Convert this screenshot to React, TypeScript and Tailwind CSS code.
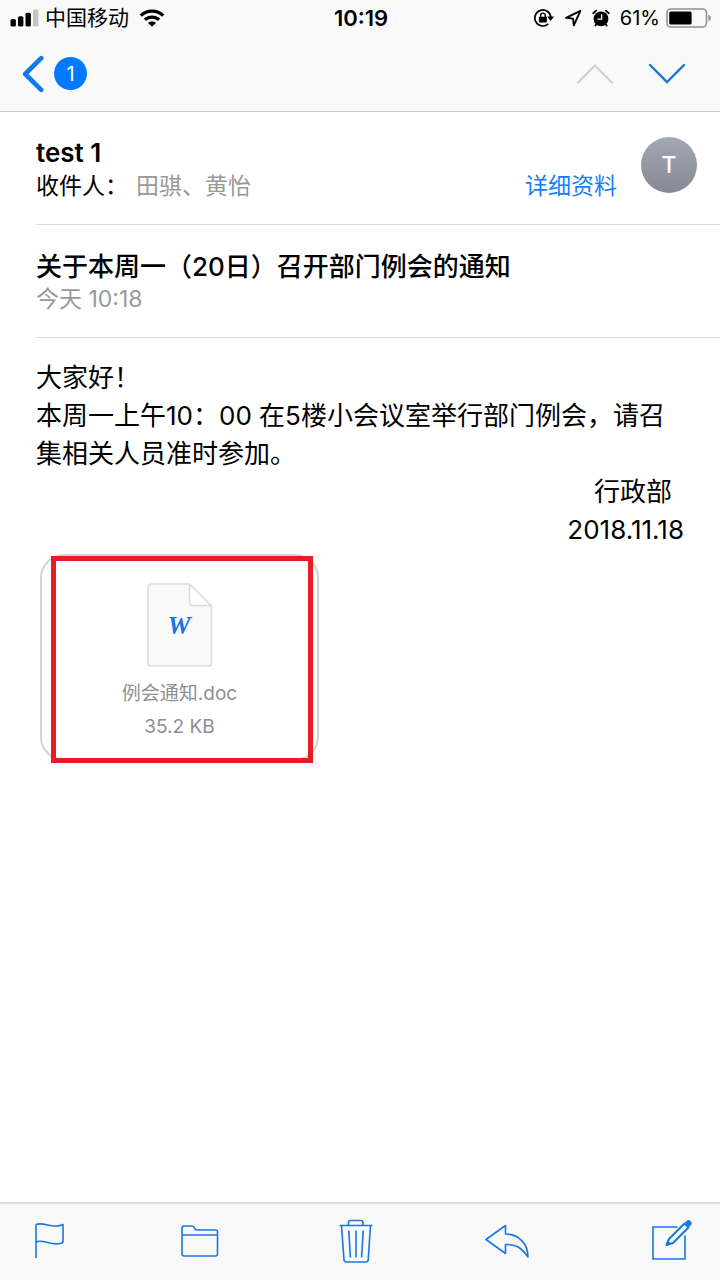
import type { ReactNode } from "react";

function SignalIcon() {
  return (
    <svg width="29" height="18" viewBox="0 0 29 18" aria-hidden="true">
      <rect x="0.5" y="10" width="5.4" height="7.5" rx="1.6" fill="#000" />
      <rect x="8" y="7.2" width="5.4" height="10.3" rx="1.6" fill="#000" />
      <rect x="15.500" y="3.700" width="5.400" height="13.800" rx="1.6" fill="#000" />
      <rect x="23" y="0.5" width="5.4" height="17" rx="1.6" fill="#c4c4c4" />
    </svg>
  );
}

function WifiIcon() {
  return (
    <svg width="26" height="18" viewBox="0 0 26 18" aria-hidden="true" fill="none" stroke="#000" strokeWidth="3.2">
      <path d="M1.8 6.6C8 .6 18 .6 24.2 6.6" />
      <path d="M6 10.9C10 7.1 16 7.1 20 10.9" />
      <path d="M13 17.6L9 13.9C11.2 12 14.8 12 17 13.9Z" fill="#000" stroke="none" />
    </svg>
  );
}

function RotationLockIcon() {
  return (
    <svg width="20" height="18" viewBox="0 0 20 18" aria-hidden="true" fill="none" stroke="#000" strokeWidth="1.7">
      <path d="M14.2 14.9A8 8 0 1 1 16.8 8.2" />
      <path d="M13.2 7.6H20L16.6 12Z" fill="#000" stroke="none" />
      <rect x="4.9" y="7.8" width="8" height="5.6" rx="0.8" fill="#000" stroke="none" />
      <path d="M6.6 8V6.4A2.3 2.3 0 0 1 11.2 6.4V8" strokeWidth="1.4" />
    </svg>
  );
}

function LocationIcon() {
  return (
    <svg width="18" height="18" viewBox="0 0 18 18" aria-hidden="true" fill="none" stroke="#000" strokeWidth="1.9" strokeLinejoin="round">
      <path d="M16.400 1.800L2 8.800L9 9.600L9.800 16.400Z" />
    </svg>
  );
}

function AlarmIcon() {
  return (
    <svg width="18" height="18" viewBox="0 0 18 18" aria-hidden="true">
      <circle cx="9" cy="9.800" r="7.400" fill="#000" />
      <path d="M1.200 4.200L4.200 1.600M16.800 4.200L13.800 1.600M4.400 15L3.400 16.600M13.600 15L14.600 16.600" stroke="#000" strokeWidth="1.8" strokeLinecap="round" />
      <path d="M9.600 5.2V10.2H5.6" fill="none" stroke="#f9f9f9" strokeWidth="1.3" />
    </svg>
  );
}

function BatteryIcon() {
  return (
    <svg width="46" height="20" viewBox="0 0 46 20" aria-hidden="true">
      <rect x="1" y="1" width="39.5" height="18" rx="4" fill="none" stroke="#909090" strokeWidth="1.6" />
      <rect x="3.2" y="3.4" width="22.4" height="13.2" rx="1.6" fill="#000" />
      <path d="M42.4 6.4Q45 7.6 45 10T42.4 13.6Z" fill="#909090" />
    </svg>
  );
}

function DocumentIcon() {
  return (
    <svg width="66" height="84" viewBox="0 0 66 84" role="img" aria-label="Word">
      <path
        d="M4 1H42L64.500 23V80Q64.500 83 61.500 83H4Q1 83 1 80V4Q1 1 4 1Z"
        fill="#f9f9f9"
        stroke="#dcdcdc"
        strokeWidth="1.6"
        strokeLinejoin="round"
      />
      <path d="M42.500 1V19Q42.500 22.500 46 22.500H64Z" fill="#fff" stroke="#dcdcdc" strokeWidth="1.6" strokeLinejoin="round" />
      <text x="32" y="51" textAnchor="middle" fill="#1376e4" fontFamily="Liberation Serif, serif" fontSize="26" fontStyle="italic" fontWeight="700">
        W
      </text>
    </svg>
  );
}

function ToolButton({ label, viewBox = "0 0 44 48", children }: { label: string; viewBox?: string; children: ReactNode }) {
  return (
    <button type="button" aria-label={label} className="flex h-12 items-center justify-center">
      <svg width="44" height="48" viewBox={viewBox} fill="none" stroke="#1877e2" strokeWidth="1.6" strokeLinejoin="round">
        {children}
      </svg>
    </button>
  );
}

export default function App() {
  return (
    <div className="flex min-h-screen flex-col bg-white font-[Inter,'Noto_Sans_CJK_SC',sans-serif] text-black" lang="zh-CN">
      <header className="border-b border-[#c8c8c8] bg-[#f9f9f9]">
        <div className="grid h-9 grid-cols-[1fr_auto_1fr] items-center pr-2 pl-2.5">
          <div className="flex items-center gap-1.5">
            <SignalIcon />
            <span className="text-[21px] leading-9">中国移动</span>
            <span className="pl-1">
              <WifiIcon />
            </span>
          </div>
          <time className="text-[22px] leading-9 font-semibold">10:19</time>
          <div className="flex items-center justify-end">
            <span className="flex items-center gap-2.5 pr-2.5">
              <RotationLockIcon />
              <LocationIcon />
              <AlarmIcon />
            </span>
            <span className="pr-1.5 text-[20px] leading-9">61%</span>
            <BatteryIcon />
          </div>
        </div>
        <nav className="flex h-[75px] items-center justify-between pr-[34px] pl-[22px]">
          <button type="button" aria-label="返回收件箱" className="flex items-center gap-2.5">
            <svg width="22" height="38" viewBox="0 0 22 38" fill="none" stroke="#1079ee" strokeWidth="4.6" strokeLinecap="round" strokeLinejoin="round">
              <path d="M19.200 3.200L3.200 19L19.200 34.800" />
            </svg>
            <span className="flex size-[33px] items-center justify-center rounded-full bg-[#007aff] text-[20px] text-white">1</span>
          </button>
          <div className="flex items-center gap-[34px]">
            <button type="button" aria-label="上一封" disabled>
              <svg width="38" height="22" viewBox="0 0 38 22" fill="none" stroke="#cfcfcf" strokeWidth="2.2" strokeLinecap="round">
                <path d="M2 19.500L19 2.500L36 19.500" />
              </svg>
            </button>
            <button type="button" aria-label="下一封">
              <svg width="38" height="22" viewBox="0 0 38 22" fill="none" stroke="#1a74dc" strokeWidth="2.4" strokeLinecap="round">
                <path d="M2 2L19 19L36 2" />
              </svg>
            </button>
          </div>
        </nav>
      </header>

      <main className="flex-1 pl-9">
        <section className="flex h-[113px] items-start justify-between border-b border-[#dcdcdc] pt-[25px] pr-[23px]">
          <div className="flex flex-1 flex-col">
            <h2 className="text-[26px] leading-8 font-semibold">test 1</h2>
            <div className="flex items-center justify-between pr-6 text-[23px] leading-[34px]">
              <p className="flex gap-2">
                <span>收件人：</span>
                <span className="text-[#999]">田骐、黄怡</span>
              </p>
              <a href="#details" className="text-[#157efb]">
                详细资料
              </a>
            </div>
          </div>
          <div className="flex size-14 items-center justify-center rounded-full bg-linear-to-b from-[#a3a8b5] to-[#858993] text-[23px] leading-7 font-medium text-white">
            T
          </div>
        </section>

        <section className="h-[113px] border-b border-[#dcdcdc] pt-6">
          <h1 className="text-[26px] leading-9 font-medium">关于本周一（20日）召开部门例会的通知</h1>
          <p className="text-[23px] leading-7 text-[#999]">今天 10:18</p>
        </section>

        <article className="pt-[21px] pr-9 text-[26px] leading-[38px]">
          <p>大家好！</p>
          <p>本周一上午10：00 在5楼小会议室举行部门例会，请召集相关人员准时参加。</p>
          <p className="pr-3 text-right">行政部</p>
          <p className="text-right">2018.11.18</p>
        </article>

        <div className="relative mt-[5px] ml-1 w-[279px]">
          <button
            type="button"
            className="flex w-full flex-col items-center rounded-3xl border-2 border-[#d2d2d2] pt-[27px] pb-4 text-[19px] leading-[33px] text-[#8e8e93]"
          >
            <DocumentIcon />
            <span className="pt-2.5">例会通知.doc</span>
            <span>35.2 KB</span>
          </button>
          <div className="pointer-events-none absolute top-0.5 right-1.5 -bottom-0.5 left-[11px] border-5 border-[#e81c24]" />
        </div>
      </main>

      <footer className="flex h-[78px] items-center justify-between border-t-2 border-[#dedede] bg-[#f9f9f9] px-[27px] pb-1">
        <ToolButton label="旗标">
          <path d="M9 42V8.500C17 5.500 26 13.500 36 8.500V26.500C26 31.500 17 22.500 9 26" />
        </ToolButton>
        <ToolButton label="移动到文件夹" viewBox="2 0 44 48">
          <path d="M4 38V12Q4 10 6 10H14Q16 10 16.500 12Q17 14 19 14H37.500Q39.500 14 39.500 16V38Q39.500 40 37.500 40H6Q4 40 4 38ZM4 19H39.500" />
        </ToolButton>
        <ToolButton label="删除" viewBox="-2 0 44 48">
          <path d="M5.500 9.500H38.500M14.500 9.500V6.500Q14.500 4.500 16.500 4.500H27Q29 4.500 29 6.500V9.500M7.500 9.500L10 44Q10.200 46 12.200 46H32Q34 46 34.200 44L36.500 9.500M14.800 14.500L16.400 41.500M22 14.500V41.500M29.200 14.500L27.600 41.500" />
        </ToolButton>
        <div className="pr-3">
          <ToolButton label="回复">
            <path d="M1 23.500L20.500 9.500V18C34 18 43 28 43 41C36 31 30 28 20.500 28.500V37.500Z" />
          </ToolButton>
        </div>
        <ToolButton label="写邮件">
          <path d="M28.500 11H4V43H36V19.500" strokeLinejoin="miter" />
          <path d="M17.500 29L20 23L35.500 7.500L39.500 11.500L24 27Z" fill="#f9f9f9" strokeWidth="2" />
          <path d="M17.200 29.300L18.800 24.900L21.700 27.800ZM36.300 6.700L38.200 4.900Q39.600 3.900 41.200 5.300Q43 7 41.900 8.500L40.200 10.500Z" fill="#1877e2" strokeWidth="1" />
        </ToolButton>
      </footer>
    </div>
  );
}
